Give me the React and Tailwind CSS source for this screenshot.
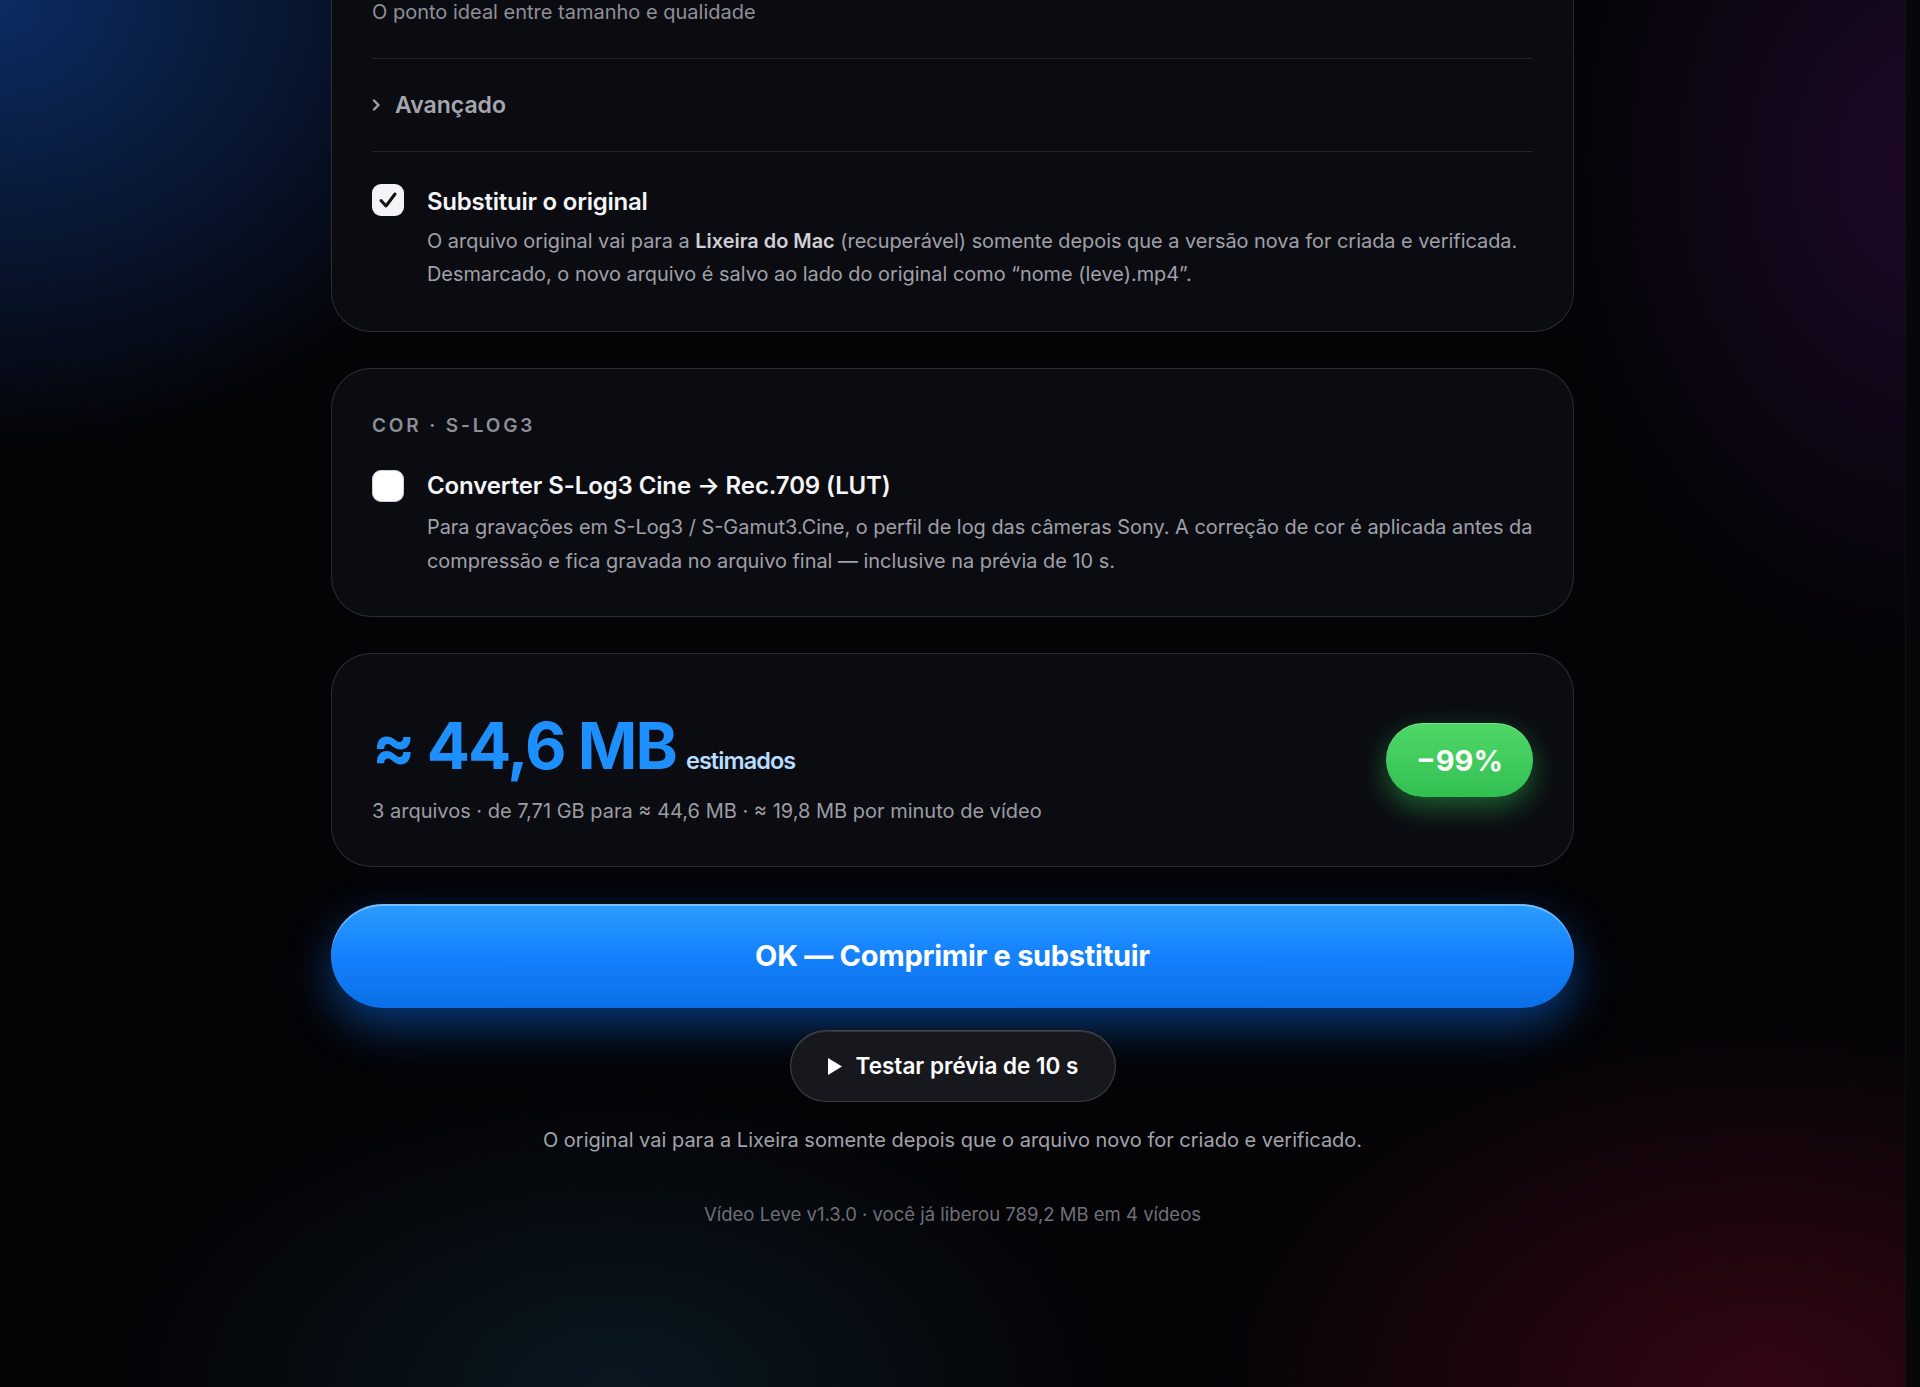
import React from "react";

const font = { fontFamily: "Inter, 'Noto Sans', sans-serif" };

const CheckBox = ({ checked }) => (
  <div
    className={`w-[32px] h-[32px] shrink-0 rounded-[9px] flex items-center justify-center ${
      checked ? "bg-[#f4f4f6]" : "bg-white border border-[#cfcfd4]"
    }`}
  >
    {checked && (
      <svg width="20" height="18" viewBox="0 0 20 18" fill="none">
        <path
          d="M3 9.5 L8 15 L17 3"
          stroke="#111114"
          strokeWidth="3"
          strokeLinecap="round"
          strokeLinejoin="round"
        />
      </svg>
    )}
  </div>
);

const App = () => {
  return (
    <div
      className="relative h-[1387px] w-[1920px] overflow-hidden bg-[#040407] flex"
      style={font}
    >
      {/* Background glows */}
      <div className="absolute inset-0 pointer-events-none bg-[radial-gradient(ellipse_760px_640px_at_0%_0%,rgba(18,70,160,0.6),transparent_70%),radial-gradient(ellipse_520px_700px_at_100%_12%,rgba(60,14,80,0.45),transparent_70%),radial-gradient(ellipse_800px_520px_at_92%_100%,rgba(90,8,28,0.55),transparent_70%),radial-gradient(ellipse_700px_420px_at_32%_100%,rgba(20,60,80,0.35),transparent_70%)]" />

      {/* Main scroll area */}
      <div className="relative w-[1905px] h-full">
        <div className="w-[1243px] mx-auto -mt-[43px] flex flex-col">
          {/* Card 1 */}
          <div className="rounded-[40px] bg-[#0b0c12] border border-white/[0.13] px-10 pt-10 pb-10">
            <p className="text-[20px] leading-7 text-[#8f8f97] pb-8">
              O ponto ideal entre tamanho e qualidade
            </p>
            <div className="border-t border-[#24252b] py-8 flex items-center gap-[14px]">
              <svg width="9" height="12" viewBox="0 0 9 12" fill="none">
                <path
                  d="M2 1.5 L6.5 6 L2 10.5"
                  stroke="#a0a0a8"
                  strokeWidth="2.4"
                  strokeLinecap="round"
                  strokeLinejoin="round"
                />
              </svg>
              <span className="text-[23px] leading-7 font-semibold text-[#a6a6ae]">
                Avançado
              </span>
            </div>
            <div className="border-t border-[#24252b] pt-8 flex gap-[23px]">
              <CheckBox checked />
              <div className="flex flex-col min-w-0">
                <p className="pt-[2px] text-[24px] leading-8 font-semibold tracking-[-0.01em] text-[#f5f5f7]">
                  Substituir o original
                </p>
                <p className="mt-[7px] whitespace-nowrap text-[19.9px] leading-[33px] text-[#a0a0a8]">
                  O arquivo original vai para a{" "}
                  <span className="font-semibold text-[#cfcfd5]">Lixeira do Mac</span>{" "}
                  (recuperável) somente depois que a versão nova for criada e verificada.
                  <br />
                  Desmarcado, o novo arquivo é salvo ao lado do original como “nome (leve).mp4”.
                </p>
              </div>
            </div>
          </div>

          {/* Card 2 */}
          <div className="mt-[36px] rounded-[40px] bg-[#0b0c12] border border-white/[0.13] px-10 pt-[42px] pb-[38px]">
            <p className="text-[19px] leading-[30px] font-semibold tracking-[0.15em] text-[#8e8e96]">
              COR · S-LOG3
            </p>
            <div className="mt-[29px] flex gap-[23px]">
              <CheckBox />
              <div className="flex flex-col min-w-0">
                <p className="text-[24px] leading-8 font-semibold tracking-[-0.005em] text-[#f5f5f7]">
                  Converter S-Log3 Cine → Rec.709 (LUT)
                </p>
                <p className="mt-[8px] whitespace-nowrap text-[19.9px] leading-[34px] text-[#a0a0a8]">
                  Para gravações em S-Log3 / S-Gamut3.Cine, o perfil de log das câmeras Sony. A correção de cor é aplicada antes da
                  <br />
                  compressão e fica gravada no arquivo final — inclusive na prévia de 10 s.
                </p>
              </div>
            </div>
          </div>

          {/* Card 3 - estimate */}
          <div className="mt-[36px] rounded-[40px] bg-[#0b0c12] border border-white/[0.13] px-10 py-10 flex items-center justify-between">
            <div className="flex flex-col">
              <div className="pt-5 flex items-baseline gap-[10px]">
                <span className="text-[64px] leading-none font-bold tracking-[-0.03em] text-[#1e8fff]">
                  ≈ 44,6 MB
                </span>
                <span className="text-[23.5px] leading-none font-semibold tracking-[-0.04em] text-[#b8ddff]">
                  estimados
                </span>
              </div>
              <p className="mt-[18px] text-[20px] leading-[30px] text-[#9c9ca4]">
                3 arquivos · de 7,71 GB para ≈ 44,6 MB · ≈ 19,8 MB por minuto de vídeo
              </p>
            </div>
            <div className="w-[147px] h-[74px] rounded-full bg-[linear-gradient(180deg,#4fd868_0%,#32bf52_100%)] shadow-[0_10px_28px_rgba(52,199,89,0.45),inset_0_1px_0_rgba(255,255,255,0.25)] flex items-center justify-center">
              <span className="text-[29px] leading-none font-bold text-white">−99%</span>
            </div>
          </div>

          {/* Primary action */}
          <button className="mt-[37px] h-[104px] w-full rounded-full bg-[linear-gradient(180deg,#2c9dff_0%,#1683ff_45%,#0a6fe6_100%)] shadow-[0_18px_44px_rgba(10,120,255,0.45),inset_0_2px_0_rgba(255,255,255,0.35)] flex items-center justify-center">
            <span className="text-[29px] font-bold tracking-[-0.01em] text-white">
              OK — Comprimir e substituir
            </span>
          </button>

          {/* Preview button */}
          <div className="mt-[22px] flex justify-center">
            <button className="w-[326px] h-[72px] rounded-full bg-[#17181d] border border-white/[0.18] shadow-[inset_0_1px_0_rgba(255,255,255,0.12)] flex items-center justify-center gap-[13px]">
              <svg width="16" height="19" viewBox="0 0 16 19">
                <path d="M1 1 L15 9.5 L1 18 Z" fill="#ffffff" />
              </svg>
              <span className="text-[22.5px] font-semibold text-white">
                Testar prévia de 10 s
              </span>
            </button>
          </div>

          <p className="mt-[24px] text-center text-[20px] leading-7 text-[#a3a3ab]">
            O original vai para a Lixeira somente depois que o arquivo novo for criado e verificado.
          </p>
          <p className="mt-[47px] text-center text-[18.5px] leading-[26px] text-[#6f6f77]">
            Vídeo Leve v1.3.0 · você já liberou 789,2 MB em 4 vídeos
          </p>
        </div>
      </div>

      {/* Scrollbar track */}
      <div className="relative w-[15px] h-full bg-[#07070a] border-l border-white/[0.04]" />
    </div>
  );
};

export default App;
